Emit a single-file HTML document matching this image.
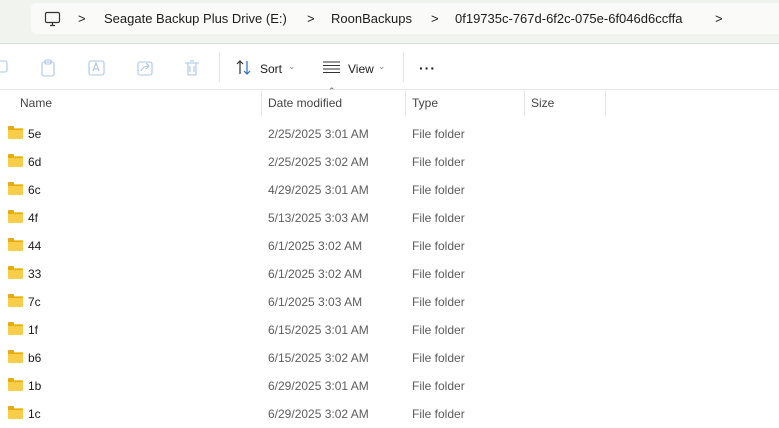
<html><head><style>
body{margin:0;width:779px;height:426px;overflow:hidden;background:#fff;font-family:"Liberation Sans",sans-serif;font-size:12px;color:#1b1b1b;position:relative}
.a{position:absolute}
.top{left:0;top:0;width:779px;height:43px;background:#f1f3ef;border-bottom:1px solid #dcdcdc}
.addr{left:31px;top:3px;width:760px;height:31px;background:#fafbf9;border-radius:5px}
.bc{top:11px;font-size:13px;color:#1b1b1b}
.tb{top:44px;height:45px;width:779px;border-bottom:1px solid #e8e8e8}
.hdr{top:96px;color:#444;font-size:12px}
.sep{top:90px;width:1px;height:26px;background:#e5e5e5}
.row{left:0;width:779px;height:28px}
.row span{position:absolute;top:7px}
.f{position:absolute;left:8px;top:8px;width:15px;height:11px;background:#f8cd4a;border-radius:1px}
.f:before{content:"";position:absolute;left:0;top:-2px;width:6px;height:3px;background:#e9a913;border-radius:1px 1px 0 0}
.f:after{content:"";position:absolute;left:0;top:1px;width:15px;height:1px;background:#e9a913}
.g{color:#5d5d5d}
</style></head><body>
<div class="a top"></div>
<div class="a addr"></div>
<svg class="a" style="left:44px;top:11px" width="18" height="16" viewBox="0 0 18 16"><rect x="1.5" y="1.5" width="14" height="10" rx="1.5" fill="none" stroke="#333" stroke-width="1.2"/><path d="M6 14.5h5M8.5 11.5v3" stroke="#333" stroke-width="1.2"/></svg>
<div class="a bc" style="left:78px">&gt;</div>
<div class="a bc" style="left:104px">Seagate Backup Plus Drive (E:)</div>
<div class="a bc" style="left:307px">&gt;</div>
<div class="a bc" style="left:331px">RoonBackups</div>
<div class="a bc" style="left:431px">&gt;</div>
<div class="a bc" style="left:455px">0f19735c-767d-6f2c-075e-6f046d6ccffa</div>
<div class="a bc" style="left:715px">&gt;</div>
<div class="a tb"></div>
<svg class="a" style="left:0;top:58px" width="210" height="20" viewBox="0 0 210 20" fill="none" stroke="#a9c6e6" stroke-width="1.1"><rect x="-6" y="3" width="13" height="11" rx="2"/><rect x="42" y="4" width="12" height="14" rx="2"/><rect x="45" y="2" width="6" height="4" rx="1"/><rect x="89" y="3" width="15" height="14" rx="2"/><path d="M93 13l3-8 3 8M94 11h4"/><rect x="138" y="4" width="14" height="13" rx="2"/><path d="M141 13q2-5 8-5M146 5l3 3-3 3"/><path d="M185 5h14M188 5v12h8V5M190 3h4M190 8v6M194 8v6"/></svg>
<div class="a" style="left:219px;top:52px;width:1px;height:30px;background:#e5e5e5"></div>
<svg class="a" style="left:235px;top:59px" width="18" height="18" viewBox="0 0 18 18" fill="none" stroke-width="1.2"><path d="M5 15V2M2 5l3-3 3 3" stroke="#333"/><path d="M12 2v13M9 12l3 3 3-3" stroke="#2a6dc4"/></svg>
<div class="a" style="left:260px;top:62px;font-size:12px">Sort</div>
<div class="a" style="left:288px;top:61px;font-size:9px;color:#888">&#8964;</div>
<svg class="a" style="left:323px;top:61px" width="18" height="12"><path d="M0 1h17M0 4.5h17M0 8h17M0 11.5h17" stroke="#333" stroke-width="1"/></svg>
<div class="a" style="left:348px;top:62px;font-size:12px">View</div>
<div class="a" style="left:378px;top:61px;font-size:9px;color:#888">&#8964;</div>
<div class="a" style="left:403px;top:52px;width:1px;height:30px;background:#e5e5e5"></div>
<div class="a" style="left:419px;top:60px;font-size:14px;font-weight:bold;letter-spacing:1px">&middot;&middot;&middot;</div>
<div class="a hdr" style="left:20px">Name</div>
<div class="a sep" style="left:261px"></div>
<div class="a" style="left:328px;top:86px;font-size:9px;color:#666">&#8963;</div>
<div class="a hdr" style="left:268px">Date modified</div>
<div class="a sep" style="left:405px"></div>
<div class="a hdr" style="left:412px">Type</div>
<div class="a sep" style="left:524px"></div>
<div class="a hdr" style="left:531px">Size</div>
<div class="a sep" style="left:605px"></div>
<div class="a row" style="top:120px"><i class="f"></i><span style="left:28px">5e</span><span class="g" style="left:268px">2/25/2025 3:01 AM</span><span class="g" style="left:412px">File folder</span></div>
<div class="a row" style="top:148px"><i class="f"></i><span style="left:28px">6d</span><span class="g" style="left:268px">2/25/2025 3:02 AM</span><span class="g" style="left:412px">File folder</span></div>
<div class="a row" style="top:176px"><i class="f"></i><span style="left:28px">6c</span><span class="g" style="left:268px">4/29/2025 3:01 AM</span><span class="g" style="left:412px">File folder</span></div>
<div class="a row" style="top:204px"><i class="f"></i><span style="left:28px">4f</span><span class="g" style="left:268px">5/13/2025 3:03 AM</span><span class="g" style="left:412px">File folder</span></div>
<div class="a row" style="top:232px"><i class="f"></i><span style="left:28px">44</span><span class="g" style="left:268px">6/1/2025 3:02 AM</span><span class="g" style="left:412px">File folder</span></div>
<div class="a row" style="top:260px"><i class="f"></i><span style="left:28px">33</span><span class="g" style="left:268px">6/1/2025 3:02 AM</span><span class="g" style="left:412px">File folder</span></div>
<div class="a row" style="top:288px"><i class="f"></i><span style="left:28px">7c</span><span class="g" style="left:268px">6/1/2025 3:03 AM</span><span class="g" style="left:412px">File folder</span></div>
<div class="a row" style="top:316px"><i class="f"></i><span style="left:28px">1f</span><span class="g" style="left:268px">6/15/2025 3:01 AM</span><span class="g" style="left:412px">File folder</span></div>
<div class="a row" style="top:344px"><i class="f"></i><span style="left:28px">b6</span><span class="g" style="left:268px">6/15/2025 3:02 AM</span><span class="g" style="left:412px">File folder</span></div>
<div class="a row" style="top:372px"><i class="f"></i><span style="left:28px">1b</span><span class="g" style="left:268px">6/29/2025 3:01 AM</span><span class="g" style="left:412px">File folder</span></div>
<div class="a row" style="top:400px"><i class="f"></i><span style="left:28px">1c</span><span class="g" style="left:268px">6/29/2025 3:02 AM</span><span class="g" style="left:412px">File folder</span></div>
</body></html>
